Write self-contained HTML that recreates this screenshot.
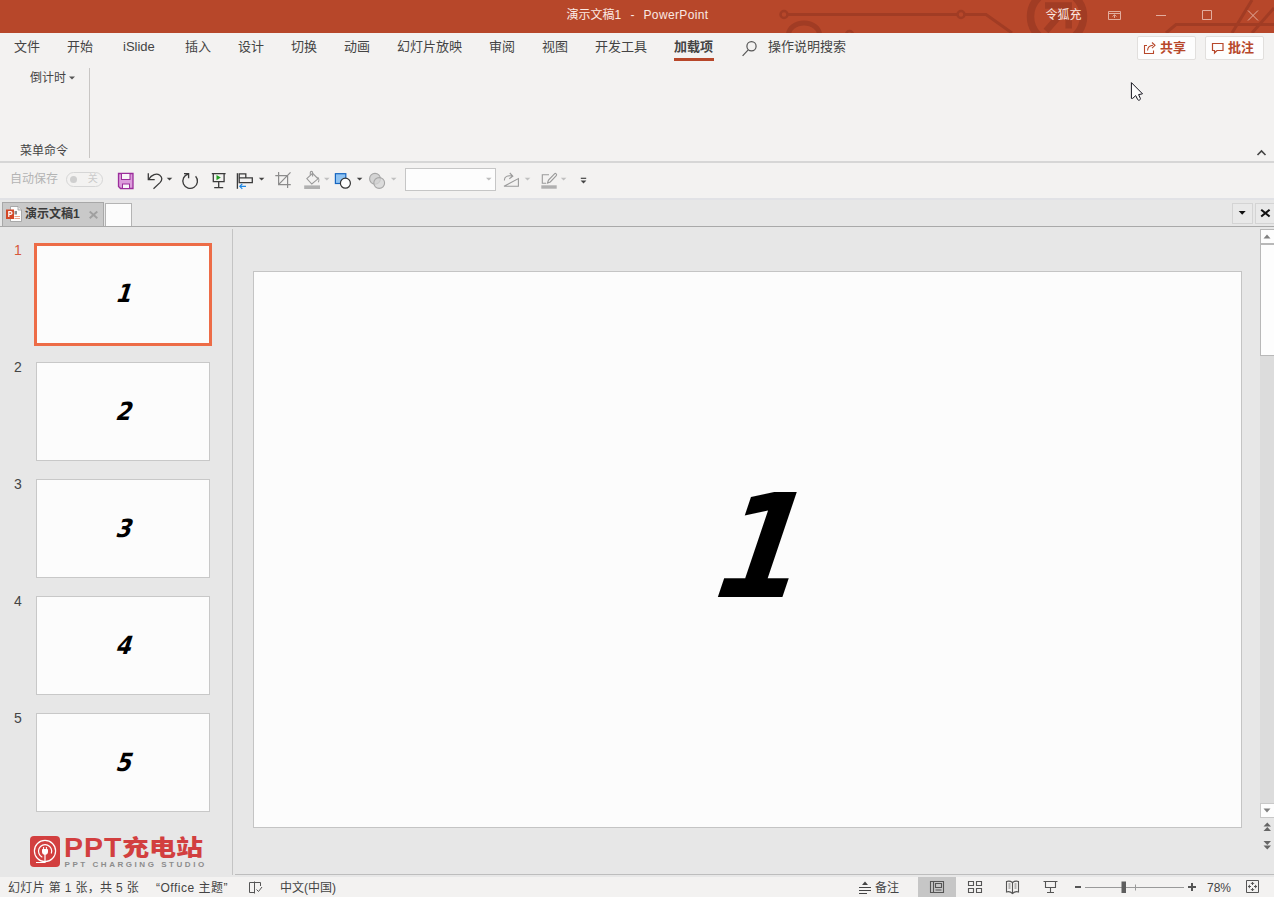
<!DOCTYPE html>
<html lang="zh-CN">
<head>
<meta charset="utf-8">
<title>演示文稿1 - PowerPoint</title>
<style>
*{box-sizing:border-box;margin:0;padding:0}
html,body{width:1274px;height:897px;overflow:hidden;background:#e7e7e7}
body{position:relative;font-family:"Liberation Sans","Noto Sans CJK SC",sans-serif;font-size:13px;color:#444;-webkit-font-smoothing:antialiased}
.abs{position:absolute}
#titlebar{position:absolute;left:0;top:0;width:1274px;height:33px;background:#b7472a;overflow:hidden}
#titlebar .t{position:absolute;color:#fbe9e3;font-size:12px;line-height:16px;white-space:nowrap}
#tabs{position:absolute;left:0;top:33px;width:1274px;height:29px;background:#f3f2f1}
#tabs span{position:absolute;top:6px;line-height:16px;font-size:13px;color:#444;white-space:nowrap}
#ribbon{position:absolute;left:0;top:62px;width:1274px;height:99px;background:#f3f2f1}
#ribline{position:absolute;left:0;top:161px;width:1274px;height:2px;background:#d6d6d6}
#qat{position:absolute;left:0;top:163px;width:1274px;height:35px;background:#f3f2f1}
#qatline{position:absolute;left:0;top:198px;width:1274px;height:2px;background:#e1e2e6}
#doctabs{position:absolute;left:0;top:200px;width:1274px;height:28px;background:#e7e7e7}
#main{position:absolute;left:0;top:228px;width:1274px;height:649px;background:#e7e7e7}
#status{position:absolute;left:0;top:877px;width:1274px;height:20px;background:#f3f2f1}
#status span{position:absolute;top:2.5px;line-height:16px;font-size:12px;color:#444;white-space:nowrap}
.btn{background:#fdfdfd;border:1px solid #e1dfdd;border-radius:2px}
.thumb{position:absolute;left:36px;width:174px;height:99px;background:#fcfcfc;border:1px solid #c8c8c8}
.thumb b{position:absolute;left:2px;width:100%;text-align:center;font-family:"DejaVu Sans","Liberation Sans",sans-serif;font-weight:bold;font-size:25px;color:#000;transform:skewX(-18deg) scaleX(0.88);line-height:26px;top:36px}
.num{position:absolute;left:14px;font-size:14px;color:#444;line-height:16px}
</style>
</head>
<body>
<div id="titlebar">
  <svg class="abs" style="left:0;top:0" width="1274" height="33" viewBox="0 0 1274 33">
    <g fill="none" stroke="#a13c24" stroke-width="3">
      <circle cx="784" cy="14.5" r="3.5" stroke-width="2.5"/>
      <path d="M788 14.5 H957"/>
      <circle cx="961" cy="14.5" r="3.5" stroke-width="2.5"/>
      <path d="M965 14.5 H986 L1012 33"/>
      <path d="M788.5 35 A15.5 12 0 0 1 819.500 35" stroke-width="5"/>
      <path d="M846 34.500 A3.500 3.500 0 0 1 853 34.500" stroke-width="2.500"/>
      <circle cx="1057" cy="16.5" r="26.5" stroke-width="7.5"/>
      <path d="M1045 5.5 H1068.7 V28.5 M1067 7 L1046 31" stroke-width="6.5"/>
      <path d="M1166 33 L1176 24.5 H1274" stroke-width="3"/>
      <path d="M1252 0 L1232 33" stroke-width="3"/>
      <path d="M1274 8 L1252 33" stroke-width="3"/>
    </g>
    <g fill="none" stroke="#e2ad9e" stroke-width="1">
      <path d="M1108.5 11.5 H1120.5 V19.5 H1108.5 Z M1108.5 13.5 H1120.5 M1114.5 18 V15 M1112.5 16.5 L1114.5 14.7 L1116.5 16.5"/>
      <path d="M1156 15.5 H1166"/>
      <path d="M1202.5 10.5 H1211.5 V19.5 H1202.5 Z"/>
      <path d="M1248 10.5 L1258 20.5 M1258 10.5 L1248 20.5"/>
    </g>
  </svg>
  <span class="t" style="left:566.5px;top:7px">演示文稿1</span><span class="t" style="left:630.5px;top:7px">-</span><span class="t" style="left:643.5px;top:7px;letter-spacing:0.37px">PowerPoint</span>
  <span class="t" style="left:1045.5px;top:7px">令狐充</span>
</div>
<div id="tabs">
  <span style="left:14px">文件</span>
  <span style="left:67px">开始</span>
  <span style="left:123px">iSlide</span>
  <span style="left:185px">插入</span>
  <span style="left:238px">设计</span>
  <span style="left:291px">切换</span>
  <span style="left:344px">动画</span>
  <span style="left:397px">幻灯片放映</span>
  <span style="left:489px">审阅</span>
  <span style="left:542px">视图</span>
  <span style="left:595px">开发工具</span>
  <span style="left:674px;font-weight:bold">加载项</span>
  <span style="left:768px">操作说明搜索</span>

  <div class="abs" style="left:674px;top:25px;width:40px;height:3px;background:#b7472a"></div>
  <svg class="abs" style="left:739px;top:5px" width="22" height="20" viewBox="0 0 22 20"><g fill="none" stroke="#555" stroke-width="1.2"><circle cx="12.5" cy="8.3" r="4.6"/><path d="M9.2 11.8 L3.6 17.8"/></g></svg>
  <div class="abs btn" style="left:1137px;top:3px;width:59px;height:24px"></div>
  <div class="abs btn" style="left:1205px;top:3px;width:59px;height:24px"></div>
  <svg class="abs" style="left:1142px;top:7px" width="16" height="16" viewBox="0 0 16 16"><g fill="none" stroke="#b7472a" stroke-width="1.1"><path d="M5 5.5 H2.5 V13.5 H11.5 V10.5"/><path d="M5.5 10.5 C5.8 7.5 8 5.5 11 5.3 M10 2.5 L13 5.3 L10 8.2"/></g></svg>
  <span style="left:1160px;top:6.5px;color:#b7472a;font-weight:bold">共享</span>
  <svg class="abs" style="left:1211px;top:8px" width="14" height="14" viewBox="0 0 14 14"><path d="M1.5 2.5 H12 V9.5 H6 L3.5 12 V9.5 H1.5 Z" fill="none" stroke="#b7472a" stroke-width="1.2"/></svg>
  <span style="left:1228px;top:6.5px;color:#b7472a;font-weight:bold">批注</span>
</div>
<div id="ribbon">
  <span class="abs" style="left:30px;top:8px;font-size:12px;line-height:16px">倒计时</span>
  <span class="abs" style="left:20px;top:81px;font-size:12px;line-height:16px">菜单命令</span>

  <svg class="abs" style="left:68px;top:13px" width="8" height="6" viewBox="0 0 8 6"><path d="M1 1.5 H7 L4 4.5 Z" fill="#555"/></svg>
  <div class="abs" style="left:89px;top:6px;width:1px;height:90px;background:#c8c6c4"></div>
  <svg class="abs" style="left:1256px;top:87px" width="11" height="8" viewBox="0 0 11 8"><path d="M1.5 6 L5.5 2 L9.5 6" fill="none" stroke="#444" stroke-width="1.6"/></svg>
  <svg class="abs" style="left:1125px;top:16px" width="24" height="28" viewBox="1125 78 24 28"><path d="M1131.4 82.6 V98.4 L1132.7 98.4 L1135.7 95.6 L1137.7 99.6 C1138.3 100.9 1140.9 99.9 1140.4 98.5 L1138.6 94.6 L1142.5 93.8 Z" fill="#fcfcfc" stroke="#14141e" stroke-width="1" stroke-linejoin="round"/></svg>
</div>
<div id="ribline"></div>
<div id="qat">
  <span class="abs" style="left:10px;top:8px;font-size:12px;line-height:16px;color:#b4b4b4">自动保存</span>

  <div class="abs" style="left:65.5px;top:8.5px;width:37px;height:15px;border:1px solid #d6d6d6;border-radius:8px"></div>
  <div class="abs" style="left:69.5px;top:12.5px;width:7px;height:7px;border-radius:4px;background:#cfcfcf"></div>
  <span class="abs" style="left:87.7px;top:8.8px;font-size:10px;line-height:14px;color:#cacaca">关</span>
  <svg class="abs" style="left:110px;top:0" width="490" height="35" viewBox="110 163 490 35">
    <!-- save -->
    <path d="M118.5 173.5 H133 V188.5 H120.5 L118.5 186.5 Z" fill="#dc9ddc" stroke="#9b2d9b" stroke-width="1.3"/>
    <rect x="121.5" y="173.5" width="8.5" height="6" fill="#f8f4f8" stroke="#9b2d9b" stroke-width="1"/>
    <rect x="122.5" y="184" width="7" height="4.5" fill="#f8f4f8" stroke="#9b2d9b" stroke-width="1"/>
    <!-- undo -->
    <g fill="none" stroke="#3b3b3b" stroke-width="1.3">
      <path d="M148.3 173.3 V179.7 H154.7"/>
      <path d="M148.8 179.2 C151.5 174.5 156.5 172.8 159.8 175.2 C162.6 177.3 162.3 180.2 160 182.6 L153.5 188.8"/>
      <!-- redo -->
      <path d="M184 173.7 H188.6 V178.3"/>
      <path d="M188.3 174 A7.3 7.3 0 1 0 195.6 176.2"/>
      <!-- slideshow -->
      <path d="M211.8 173.6 H225.6 M213.3 173.6 V181.7 H224.1 V173.6 M218.7 181.7 V187.6 M214.2 187.6 H223.2"/>
      <!-- align -->
      <path d="M237.4 173.2 V188.8"/>
      <path d="M239.2 173.8 H245.8 V177.9 H239.2 Z M239.2 177.9 H252.3 V182.6 H239.2 Z"/>
    </g>
    <path d="M216.5 175 L220.8 177.6 L216.5 180.3 Z" fill="#21a121"/>
    <path d="M246 186.3 H239.8 M242.3 183.8 L239.8 186.3 L242.3 188.8" fill="none" stroke="#1e88e5" stroke-width="1.2"/>
    <path d="M166.7 177.7 H172.3 L169.5 180.6 Z" fill="#444"/>
    <path d="M258.8 177.7 H264.4 L261.6 180.6 Z" fill="#444"/>
    <!-- crop (disabled) -->
    <g fill="none" stroke="#8c8c8c" stroke-width="1.2">
      <path d="M278.6 172 V184.6 H290.8 M275.3 175.7 H287.6 V187.9 M278.8 184.4 L290.5 172.3"/>
    </g>
    <!-- fill bucket (disabled) -->
    <rect x="304.2" y="185.4" width="15.8" height="3.6" fill="#b0b0b0"/>
    <g fill="none" stroke="#9a9a9a" stroke-width="1.1">
      <path d="M306.8 178.6 L312.6 173.3 L318 178.8 L311.8 184 Z"/>
      <path d="M312.6 176.5 V172.5 C312.6 171 310.3 171 310.3 172.5 V175"/>
      <path d="M317.5 177.2 C319 178 319.2 180.5 318.3 182.3"/>
    </g>
    <path d="M324 177.7 H329.6 L326.8 180.6 Z" fill="#c0c0c0"/>
    <!-- shapes -->
    <rect x="335.4" y="173.7" width="10.4" height="9.8" fill="#8fc3f2" stroke="#1565c0" stroke-width="1.2"/>
    <circle cx="345.4" cy="183.2" r="5" fill="#fdfdfd" stroke="#333" stroke-width="1.2"/>
    <path d="M356.8 177.7 H362.4 L359.6 180.6 Z" fill="#444"/>
    <!-- merge shapes (disabled) -->
    <circle cx="375" cy="178.8" r="5.4" fill="#d4d4d4" stroke="#a6a6a6" stroke-width="1.1"/>
    <circle cx="379.2" cy="183" r="5.4" fill="#d4d4d4" fill-opacity="0.75" stroke="#a6a6a6" stroke-width="1.1"/>
    <path d="M390.9 177.7 H396.5 L393.7 180.6 Z" fill="#c0c0c0"/>
    <!-- combo -->
    <rect x="405.5" y="168.5" width="90" height="22" fill="#fdfdfd" stroke="#c6c6c6" stroke-width="1"/>
    <path d="M486 177.7 H491.6 L488.8 180.6 Z" fill="#bdbdbd"/>
    <!-- rotate (disabled) -->
    <g fill="none" stroke="#9a9a9a" stroke-width="1.1">
      <path d="M504 186.2 H518.4 V178.6 Z"/>
      <path d="M504.5 180.5 C504 176.5 508 175 512 176 M509.8 173 L512.8 176.2 L509.3 178.7"/>
    </g>
    <path d="M524.7 177.7 H530.3 L527.5 180.6 Z" fill="#c0c0c0"/>
    <!-- outline pen (disabled) -->
    <rect x="541.3" y="185.3" width="15.4" height="3.4" fill="#b0b0b0"/>
    <g fill="none" stroke="#9a9a9a" stroke-width="1.1">
      <path d="M549 174.8 H542.3 V183.3 H546"/>
      <path d="M547.5 183 L548.5 180 L554.5 173.8 C555.5 172.8 557.3 174.5 556.3 175.6 L550.3 182 Z"/>
    </g>
    <path d="M560.8 177.7 H566.4 L563.6 180.6 Z" fill="#c0c0c0"/>
    <!-- customize -->
    <path d="M580.8 178.3 H586.2" stroke="#444" stroke-width="1.2"/>
    <path d="M580.6 180.6 H586.4 L583.5 183.6 Z" fill="#444"/>
  </svg>
</div>
<div id="qatline"></div>
<div id="doctabs">
  <div class="abs" style="left:2px;top:2px;width:102px;height:25px;background:#c9c9c9;border:1px solid #a8a8a8;border-bottom:none"></div>
  <svg class="abs" style="left:5px;top:5px" width="18" height="18" viewBox="0 0 18 18">
    <path d="M5.5 1.5 H13 L16.5 5 V16.5 H5.5 Z" fill="#fdfdfd" stroke="#9a9a9a" stroke-width="0.8"/>
    <path d="M13 1.5 V5 H16.5" fill="#e8e8e8" stroke="#9a9a9a" stroke-width="0.8"/>
    <path d="M9.5 6 H12 V9.5 H9.5 Z" fill="#8a8a8a"/>
    <path d="M9.5 11.5 H15 M9.5 13.5 H15" stroke="#e9967a" stroke-width="0.9"/>
    <rect x="1" y="4.5" width="8" height="9.5" fill="#d24726"/>
    <path d="M3.8 12 V6.6 H5.6 C7.4 6.6 7.4 9.4 5.6 9.4 H3.8" fill="none" stroke="#fff" stroke-width="1.2"/>
  </svg>
  <span class="abs" style="left:25px;top:6px;font-size:12px;line-height:16px;font-weight:bold;color:#3a3a3a;white-space:nowrap">演示文稿1</span>
  <svg class="abs" style="left:88px;top:10px" width="11" height="10" viewBox="0 0 11 10"><path d="M1.7 1.5 L9.3 8.3 M9.3 1.5 L1.7 8.3" stroke="#a0a0a0" stroke-width="1.9"/></svg>
  <div class="abs" style="left:105px;top:3px;width:27px;height:24px;background:#fcfcfc;border:1px solid #b4b4b4;border-bottom:none"></div>
  <div class="abs" style="left:0;top:26px;width:1274px;height:1px;background:#a9a9a9"></div>
  <div class="abs" style="left:1232px;top:3px;width:21px;height:21px;background:#e9e9e9;border:1px solid #d4d4d4"></div>
  <div class="abs" style="left:1255px;top:3px;width:19px;height:21px;background:#e9e9e9;border:1px solid #d4d4d4;border-right:none"></div>
  <svg class="abs" style="left:1232px;top:3px" width="42" height="21" viewBox="1232 203 42 21">
    <path d="M1238.7 211 H1245.7 L1242.2 214.8 Z" fill="#111"/>
    <path d="M1261.2 209.8 L1269.6 216.5 M1269.6 209.8 L1261.2 216.5" stroke="#111" stroke-width="2.1"/>
  </svg>
</div>
<div id="main">
  <div class="abs" id="slide" style="left:253px;top:43px;width:989px;height:557px;background:#fcfcfc;border:1px solid #c4c4c4"></div>

  <div class="abs" style="left:232px;top:1px;width:1px;height:646px;background:#c4c4c4"></div>
  <span class="num" style="top:14px;color:#d6583a">1</span>
  <span class="num" style="top:131px">2</span>
  <span class="num" style="top:248px">3</span>
  <span class="num" style="top:365px">4</span>
  <span class="num" style="top:482px">5</span>
  <div class="thumb" style="left:34px;top:15px;width:178px;height:103px;border:3px solid #ed6c47"><b style="top:35px">1</b></div>
  <div class="thumb" style="top:134px"><b>2</b></div>
  <div class="thumb" style="top:251px"><b>3</b></div>
  <div class="thumb" style="top:368px"><b>4</b></div>
  <div class="thumb" style="top:485px"><b>5</b></div>
  <!-- logo -->
  <div class="abs" style="left:30px;top:608px;width:30px;height:31px;border-radius:4px;background:#d23f3f"></div>
  <svg class="abs" style="left:30px;top:608px" width="30" height="31" viewBox="0 0 30 31"><g fill="none" stroke="#fff" stroke-width="1.2"><circle cx="15" cy="15" r="10.6"/><path d="M21.3 17.5 A6.6 6.6 0 1 0 12.3 21.2"/><path d="M15 19 V26.5 H6"/></g><path d="M12.5 13.5 H17.5 V16.2 C17.5 19.2 12.5 19.2 12.5 16.2 Z M13.6 11 V13.5 M16.4 11 V13.5" fill="#fff" stroke="#fff" stroke-width="1"/></svg>
  <span class="abs" style="left:64px;top:604px;font-family:'Liberation Sans',sans-serif;font-weight:bold;font-size:27.5px;line-height:32px;color:#d23f3f;letter-spacing:1px;white-space:nowrap;transform:scaleX(1.035);transform-origin:0 0">PPT</span>
  <span class="abs" style="left:122px;top:598px;font-family:'Noto Sans CJK SC',sans-serif;font-weight:900;font-size:27px;line-height:40px;color:#d23f3f;white-space:nowrap;transform:scaleY(0.8);transform-origin:0 50%">充电站</span>
  <span class="abs" style="left:64.5px;top:631.5px;font-family:'Liberation Sans',sans-serif;font-size:8px;line-height:10px;color:#8c8c8c;letter-spacing:2.55px;white-space:nowrap;font-weight:bold">PPT CHARGING STUDIO</span>
  <!-- slide -->
  <b class="abs" id="big1" style="left:704px;top:235px;width:120px;text-align:center;font-family:'DejaVu Sans','Liberation Sans',sans-serif;font-weight:bold;font-size:144px;line-height:168px;color:#000;transform:skewX(-18.6deg) scaleX(0.88)">1</b>
  <!-- scrollbar -->
  <div class="abs" style="left:1260px;top:1px;width:14px;height:575px;background:#dcdcdc"></div>
  <div class="abs" style="left:1260px;top:1px;width:15px;height:15px;background:#fdfdfd;border:1px solid #b8b8b8"></div>
  <div class="abs" style="left:1260px;top:16px;width:15px;height:112px;background:#fdfdfd;border:1px solid #b8b8b8"></div>
  <div class="abs" style="left:1260px;top:575px;width:15px;height:15px;background:#fdfdfd;border:1px solid #c8c8c8"></div>
  <svg class="abs" style="left:1259px;top:0" width="15" height="648" viewBox="1259 228 15 648">
    <path d="M1263.5 238.5 H1270.5 L1267 234.5 Z" fill="#808080"/>
    <path d="M1263.5 808.5 H1270.5 L1267 812.5 Z" fill="#808080"/>
    <path d="M1263.5 826.5 H1271 L1267.3 822.5 Z M1263.5 831 H1271 L1267.3 827 Z" fill="#666"/>
    <path d="M1263.5 841 H1271 L1267.3 845 Z M1263.5 845.5 H1271 L1267.3 849.5 Z" fill="#666"/>
  </svg>
  <div class="abs" style="left:235px;top:646px;width:1039px;height:1px;background:#bdbdbd"></div>
</div>
<div id="status">
  <span style="left:8px;letter-spacing:0.34px">幻灯片 第 1 张，共 5 张</span>
  <span style="left:156px;letter-spacing:0.5px">“Office 主题”</span>
  <span style="left:280px">中文(中国)</span>
  <span style="left:875px">备注</span>
  <span style="left:1207px">78%</span>

  <svg class="abs" style="left:246px;top:2px" width="18" height="16" viewBox="0 0 18 16"><g fill="none" stroke="#555" stroke-width="1"><path d="M8.5 3.5 H3.5 V13.5 H8.5 M8.5 2.5 V14.5"/><path d="M8.5 3.5 H14.5 V7"/><path d="M10.5 10.5 L12.5 12.5 L16 8"/></g></svg>
  <svg class="abs" style="left:857px;top:3px" width="16" height="14" viewBox="0 0 16 14"><g stroke="#444" stroke-width="1.1" fill="none"><path d="M2 7.5 H14 M2 10.5 H14 M2 13.5 H10"/></g><path d="M5 5 H11 L8 1.5 Z" fill="#444"/></svg>
  <div class="abs" style="left:918px;top:0;width:38px;height:20px;background:#c6c6c6"></div>
  <svg class="abs" style="left:918px;top:0" width="350" height="20" viewBox="918 877 350 20">
    <g fill="none" stroke="#555" stroke-width="1.1">
      <path d="M930.5 881.5 H943.5 V892.5 H930.5 Z M933.5 881.5 V892.5 M935.5 883.5 H941.5 V887.5 H935.5 Z M935.5 890 H941.5"/>
      <path d="M968.5 881.5 H973.5 V885.5 H968.5 Z M976.5 881.5 H981.5 V885.5 H976.5 Z M968.5 888.5 H973.5 V892.5 H968.5 Z M976.5 888.5 H981.5 V892.5 H976.5 Z"/>
      <path d="M1012.5 882.5 V893.5 M1012.5 882.5 C1010.5 881 1008 881 1006.5 881.5 V892 C1008 891.5 1010.5 891.5 1012.5 893.5 C1014.5 891.5 1017 891.5 1018.500 892 V881.5 C1017 881 1014.500 881 1012.500 882.500"/>
      <path d="M1008.500 884 H1010.500 M1008.500 886 H1010.500 M1008.500 888 H1010.500 M1014.500 884 H1016.500 M1014.500 886 H1016.500 M1014.500 888 H1016.500" stroke-width="0.8"/>
      <path d="M1043.500 881.500 H1057.500 M1045.500 881.500 V887.500 H1055.500 V881.500 M1050.500 887.500 V892.500 M1047 892.500 H1054"/>
    </g>
    <path d="M1075 886 H1081 V888 H1075 Z" fill="#555"/>
    <path d="M1085 887.500 H1184" stroke="#9a9a9a" stroke-width="1"/>
    <path d="M1135.500 884.500 V890.500" stroke="#9a9a9a" stroke-width="1"/>
    <rect x="1121.500" y="881.500" width="4.500" height="11.500" fill="#5e5e5e"/>
    <path d="M1188 886 H1191 V883 H1193 V886 H1196 V888 H1193 V891 H1191 V888 H1188 Z" fill="#555"/>
    <g fill="none" stroke="#555" stroke-width="1">
      <path d="M1246.500 880.500 H1258.500 V892.500 H1246.500 Z"/>
      <path d="M1252.500 882 V885 M1252.500 888 V891 M1248 886.500 H1251 M1254 886.500 H1257" />
    </g>
    <path d="M1250.500 884 H1254.500 L1252.500 882 Z M1250.500 889 H1254.500 L1252.500 891 Z M1250 884.500 V888.500 L1248 886.500 Z M1255 884.500 V888.500 L1257 886.500 Z" fill="#555"/>
  </svg>
</div>
</body>
</html>
